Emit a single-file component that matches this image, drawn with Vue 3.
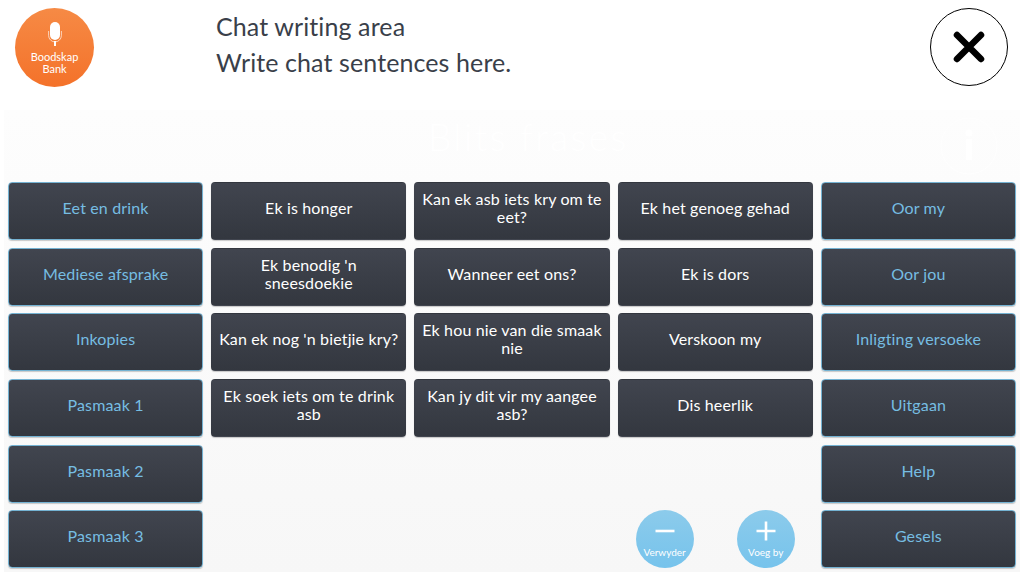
<script setup>
// Each row: category, three phrases, category
const rows = [
  ['Eet en drink', 'Ek is honger', 'Kan ek asb iets kry om te eet?', 'Ek het genoeg gehad', 'Oor my'],
  ['Mediese afsprake', "Ek benodig 'n sneesdoekie", 'Wanneer eet ons?', 'Ek is dors', 'Oor jou'],
  ['Inkopies', "Kan ek nog 'n bietjie kry?", 'Ek hou nie van die smaak nie', 'Verskoon my', 'Inligting versoeke'],
  ['Pasmaak 1', 'Ek soek iets om te drink asb', 'Kan jy dit vir my aangee asb?', 'Dis heerlik', 'Uitgaan'],
  ['Pasmaak 2', '', '', '', 'Help'],
  ['Pasmaak 3', '', '', 'ACTIONS', 'Gesels']
];
</script>

<template>
  <div class="page">
    <header class="top">
      <div class="bank">
        <svg class="mic" viewBox="0 0 14 24" width="14" height="24">
          <rect x="2" y="0" width="10" height="18" rx="5" fill="#fff" />
          <path d="M0.6 9v4.5a6.4 6.4 0 0 0 12.8 0V9" fill="none" stroke="#fff" stroke-opacity="0.65" stroke-width="1" />
          <rect x="6" y="19" width="2" height="5" fill="#fff" />
        </svg>
        <span>Boodskap<br />Bank</span>
      </div>
      <div class="chat">
        <div>Chat writing area</div>
        <div>Write chat sentences here.</div>
      </div>
      <button class="close">
        <svg viewBox="0 0 34 34" width="34" height="34">
          <path d="M5 5 L29 29 M29 5 L5 29" stroke="#000" stroke-width="6.5" stroke-linecap="round" />
        </svg>
      </button>
    </header>

    <section class="panel">
      <div class="title-bar">
        <span class="title">Blits frases</span>
        <svg class="info" viewBox="0 0 58 58" width="58" height="58">
          <circle cx="29" cy="29" r="28" fill="none" stroke="#fff" stroke-width="1" />
          <circle cx="29" cy="16" r="3.5" fill="#fff" />
          <rect x="26" y="22" width="6" height="21" fill="#fff" />
        </svg>
      </div>
      <div class="grid">
        <template v-for="(row, r) in rows" :key="r">
          <template v-for="(cell, c) in row" :key="c">
            <div v-if="cell === 'ACTIONS'" class="actions">
              <div class="round">
                <svg viewBox="0 0 20 20" width="20" height="20">
                  <path d="M0.5 10H19.5" stroke="#fff" stroke-width="2.6" />
                </svg>
                <span>Verwyder</span>
              </div>
              <div class="round">
                <svg viewBox="0 0 20 20" width="20" height="20">
                  <path d="M0.5 10H19.5M10 0.5V19.5" stroke="#fff" stroke-width="2.6" />
                </svg>
                <span>Voeg by</span>
              </div>
            </div>
            <div v-else-if="!cell"></div>
            <button v-else class="btn" :class="{ cat: c === 0 || c === 4 }">{{ cell }}</button>
          </template>
        </template>
      </div>
    </section>
  </div>
</template>

<style>
body {
  margin: 0;
  background: #fff;
}
</style>

<style scoped>
.page {
  width: 1024px;
  height: 576px;
  overflow: hidden;
  font-family: Lato, "Noto Sans", sans-serif;
  background: #fff;
}

.top {
  height: 110px;
  display: flex;
  align-items: flex-start;
}

.bank {
  width: 79px;
  height: 79px;
  margin: 8px 0 0 15px;
  border-radius: 50%;
  background: linear-gradient(#f68a45, #f4722a);
  color: #fff;
  font-size: 11px;
  line-height: 12px;
  text-align: center;
  display: flex;
  flex-direction: column;
  align-items: center;
  padding-top: 14px;
  box-sizing: border-box;
}

.mic {
  margin-bottom: 5px;
}

.chat {
  margin: 8px 0 0 122px;
  font-size: 25px;
  letter-spacing: 0.1px;
  line-height: 36px;
  color: #3a3f4a;
  flex: 1;
}

.close {
  width: 78px;
  height: 78px;
  margin: 8px 16px 0 0;
  padding: 0;
  border: 1px solid #000;
  border-radius: 50%;
  background: #fff;
  display: flex;
  align-items: center;
  justify-content: center;
}

.panel {
  margin: 0 4px;
  height: 462px;
  background: linear-gradient(#fdfdfd, #f7f7f7);
  padding: 0 4px;
}

.title-bar {
  height: 72px;
  display: flex;
  align-items: flex-start;
  justify-content: space-between;
  padding: 0 18px 0 420px;
}

.title {
  font-size: 37px;
  line-height: 36px;
  letter-spacing: 2.4px;
  font-weight: 300;
  color: #fff;
  margin-top: 9px;
}

.info {
  margin-top: 7px;
}

.grid {
  display: grid;
  grid-template-columns: repeat(5, 1fr);
  grid-auto-rows: 58px;
  gap: 7.7px 8px;
}

.btn {
  border: 1px solid transparent;
  border-radius: 4px;
  background: linear-gradient(#41454f, #33373f);
  color: #fff;
  font-family: inherit;
  font-size: 16px;
  letter-spacing: 0.15px;
  line-height: 18px;
  padding: 0 4px 6px;
  box-shadow: 0 1px 1px rgba(0, 0, 0, 0.2);
}

.btn.cat {
  border-color: #74b2d2;
  color: #76bde2;
}

.actions {
  display: flex;
  justify-content: space-between;
  padding: 0 18px;
}

.round {
  width: 58px;
  height: 58px;
  border-radius: 50%;
  background: linear-gradient(#8ccbeb, #76c3ec);
  color: #fff;
  font-size: 10px;
  display: flex;
  flex-direction: column;
  align-items: center;
  padding-top: 11px;
  box-sizing: border-box;
  line-height: 12px;
  gap: 5px;
}
</style>
